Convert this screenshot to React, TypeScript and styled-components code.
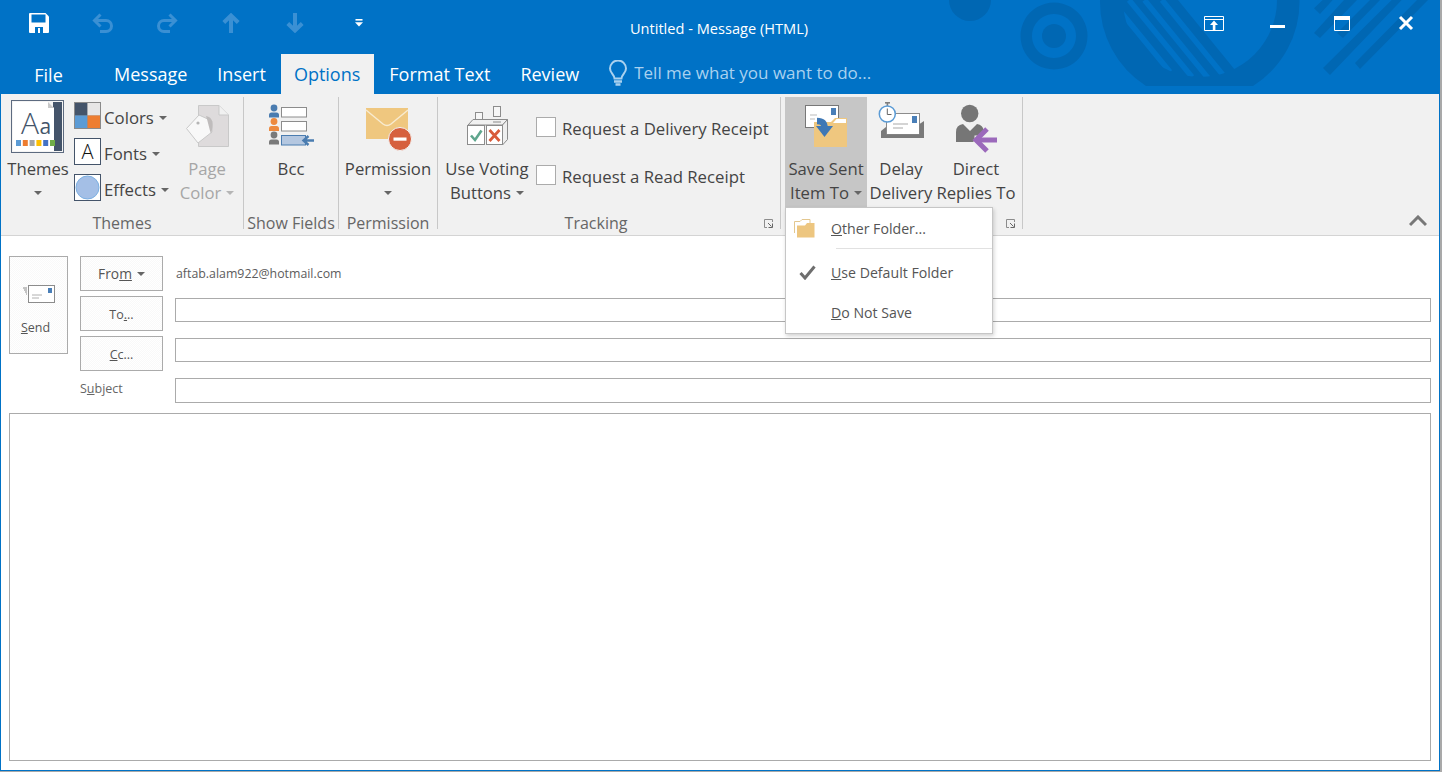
import React from "react";
import styled, { createGlobalStyle } from "styled-components";

const BLUE = "#0072c6";
const DARK = "#0067b3";
const FONT = `"Open Sans", "Noto Sans", "Liberation Sans", sans-serif`;

const Global = createGlobalStyle`
  html, body { margin: 0; padding: 0; width: 1442px; height: 772px; background: #a9a9a9; overflow: hidden; }
  #root { width: 1442px; height: 772px; }
  * { box-sizing: border-box; }
`;

const Window = styled.div`
  width: 1440px;
  height: 771px;
  background: #fff;
  border: 1px solid ${BLUE};
  border-top: 0;
  font-family: ${FONT};
  display: flex;
  flex-direction: column;
  position: relative;
`;

const Header = styled.header`
  height: 94px;
  margin: 0 -1px;
  background: ${BLUE};
  position: relative;
  flex: none;
`;

const Deco = styled.svg`
  position: absolute;
  left: 0;
  top: 0;
`;

const TitleRow = styled.div`
  position: relative;
  height: 54px;
  display: grid;
  grid-template-columns: 1fr auto 1fr;
  align-items: start;
`;

const Qat = styled.div`
  display: flex;
  padding: 13px 0 0 7px;
`;

const QatButton = styled.div`
  width: 64px;
  height: 20px;
  display: flex;
  align-items: center;
  justify-content: center;
`;

const Title = styled.div`
  color: #fff;
  font-size: 14.6px;
  line-height: 20px;
  padding: 18px 2px 0 0;
`;

const WinButtons = styled.div`
  display: flex;
  justify-content: flex-end;
  padding: 13px 2px 0 0;
`;

const WinButton = styled.div`
  width: 64px;
  height: 20px;
  display: flex;
  align-items: center;
  justify-content: center;
`;

const TabRow = styled.nav`
  position: relative;
  height: 40px;
  display: flex;
  padding-left: 1px;
`;

const Tab = styled.div<{ $active?: boolean; $wide?: boolean }>`
  height: 40px;
  line-height: 40px;
  font-size: 18px;
  padding: 0 ${(p) => (p.$active ? "14px 0 13px" : "15px")};
  color: ${(p) => (p.$active ? BLUE : "#fff")};
  background: ${(p) => (p.$active ? "#f1f1f1" : "transparent")};
  ${(p) => (p.$wide ? "width: 98px; text-align: center; padding: 1px 3px 0 0;" : "")}
  white-space: nowrap;
`;

const TellMe = styled.div`
  display: flex;
  align-items: center;
  gap: 7px;
  margin-left: 15px;
  padding-bottom: 3px;
  color: #a9d1ef;
  font-size: 17px;
  white-space: nowrap;
`;

const Ribbon = styled.section`
  position: relative;
  flex: none;
  height: 142px;
  background: #f1f1f1;
  border-bottom: 1px solid #d4d4d4;
  display: flex;
  padding-top: 3px;
  color: #444;
`;

const Group = styled.div<{ $w: number }>`
  position: relative;
  width: ${(p) => p.$w}px;
  height: 132px;
  border-right: 1px solid #c8c8c8;
  flex: none;
  display: flex;
  flex-direction: column;
`;

const GroupBody = styled.div<{ $pad?: number }>`
  height: 112px;
  display: flex;
  align-items: flex-start;
  padding-left: ${(p) => p.$pad ?? 0}px;
`;

const GroupLabel = styled.div<{ $shift?: number }>`
  height: 20px;
  line-height: 28px;
  font-size: 16px;
  color: #666;
  text-align: center;
  white-space: nowrap;
  padding-right: ${(p) => p.$shift ?? 0}px;
`;

const Launcher = styled.svg`
  position: absolute;
  right: 7px;
  bottom: 1px;
`;

const LargeButton = styled.div<{ $w: number; $active?: boolean; $disabled?: boolean }>`
  width: ${(p) => p.$w}px;
  height: 111px;
  flex: none;
  display: flex;
  flex-direction: column;
  align-items: center;
  background: ${(p) => (p.$active ? "#c6c6c6" : "transparent")};
  color: ${(p) => (p.$disabled ? "#a6a6a6" : "#444")};
`;

const IconSlot = styled.div`
  height: 60px;
  flex: none;
  display: flex;
  justify-content: center;
`;

const Line = styled.div`
  height: 24px;
  line-height: 24px;
  font-size: 16.7px;
  white-space: nowrap;
  display: flex;
  align-items: center;
  justify-content: center;
`;

const Caret = styled.span<{ $tone?: string; $gap?: number }>`
  display: inline-block;
  width: 0;
  height: 0;
  margin-left: ${(p) => p.$gap ?? 5}px;
  border-left: 4px solid transparent;
  border-right: 4px solid transparent;
  border-top: 4px solid ${(p) => p.$tone ?? "#666"};
`;

const SmallStack = styled.div`
  width: 101px;
  margin-left: 3px;
  padding-top: 5px;
  display: flex;
  flex-direction: column;
  gap: 9px;
  flex: none;
`;

const SmallRow = styled.div`
  height: 27px;
  display: flex;
  align-items: center;
  font-size: 16.8px;
  gap: 3px;
  white-space: nowrap;
`;

const SmallLabel = styled.span`
  padding-top: 4px;
  display: flex;
  align-items: center;
`;

const Swatch = styled.svg`
  flex: none;
`;

const Checks = styled.div`
  padding: 20px 0 0 2px;
  display: flex;
  flex-direction: column;
  gap: 28px;
`;

const CheckRow = styled.div`
  height: 20px;
  display: flex;
  align-items: center;
  gap: 6px;
  font-size: 16.75px;
  white-space: nowrap;
`;

const CheckLabel = styled.span`
  padding-top: 2px;
`;

const CheckBox = styled.span`
  width: 20px;
  height: 20px;
  flex: none;
  background: #fff;
  border: 1px solid #ababab;
`;

const Collapse = styled.svg`
  margin-left: auto;
  margin-right: 12px;
  margin-top: 118px;
`;

const Menu = styled.div`
  position: absolute;
  left: 784px;
  top: 113px;
  width: 208px;
  height: 127px;
  background: #fff;
  border: 1px solid #c6c6c6;
  box-shadow: 1px 2px 4px rgba(0, 0, 0, 0.18);
  z-index: 5;
  color: #555;
  font-size: 14.15px;
`;

const MenuItem = styled.div<{ $h: number }>`
  height: ${(p) => p.$h}px;
  display: flex;
  align-items: center;
  white-space: nowrap;
`;

const MenuIcon = styled.span<{ $nudge?: number }>`
  width: 45px;
  flex: none;
  display: flex;
  justify-content: center;
  padding: 0 8px 0 ${(p) => p.$nudge ?? 0}px;
`;

const MenuText = styled.span`
  padding-top: 1px;
`;

const MenuSep = styled.div`
  height: 1px;
  margin: 0 0 3px 50px;
  background: #e1e1e1;
`;

const Compose = styled.main`
  flex: 1;
  min-height: 0;
  display: flex;
  flex-direction: column;
  gap: 10px;
  padding: 20px 8px 9px;
`;

const Head = styled.div`
  display: flex;
  gap: 12px;
  align-items: flex-start;
  color: #555;
`;

const hatch = `repeating-conic-gradient(#f9f9f9 0 25%, #fff 0 50%) 0 0 / 2px 2px`;

const SendButton = styled.div`
  width: 59px;
  height: 98px;
  flex: none;
  border: 1px solid #ababab;
  background: ${hatch};
  display: flex;
  flex-direction: column;
  align-items: center;
  padding-top: 28px;
  gap: 15px;
  font-size: 12.5px;
  line-height: 18px;
`;

const SendLabel = styled.span`
  padding-right: 6px;
`;

const Fields = styled.div`
  flex: 1;
  display: grid;
  grid-template-columns: 83px 1fr;
  column-gap: 12px;
  row-gap: 5px;
  grid-auto-rows: auto;
  font-size: 12.5px;
`;

const FieldButton = styled.div<{ $large?: boolean }>`
  height: 35px;
  border: 1px solid #ababab;
  background: ${hatch};
  display: flex;
  align-items: center;
  justify-content: center;
  padding-top: ${(p) => (p.$large ? 0 : 1)}px;
  font-size: ${(p) => (p.$large ? 13.8 : 12.5)}px;
  white-space: nowrap;
`;

const FromValue = styled.div`
  height: 35px;
  line-height: 35px;
  padding-left: 1px;
  font-size: 12.35px;
  color: #5c5c5c;
`;

const Input = styled.div<{ $tall?: boolean }>`
  height: ${(p) => (p.$tall ? 25 : 24)}px;
  margin-top: 2px;
  border: 1px solid #ababab;
  background: #fff;
`;

const SubjectLabel = styled.div`
  margin-top: 3px;
  line-height: 20px;
  color: #666;
`;

const Body = styled.div`
  flex: 1;
  border: 1px solid #ababab;
  background: #fff;
`;

const Icon = ({ x, w, y = 97, h = 60, children }: { x: number; w: number; y?: number; h?: number; children: React.ReactNode }) => (
  <svg width={w} height={h} viewBox={`${x} ${y} ${w} ${h}`}>{children}</svg>
);

const Decoration = () => (
  <Deco width="1442" height="94" viewBox="0 0 1442 94">
    <defs>
      <clipPath id="inner"><circle cx="1200" cy="0" r="77" /></clipPath>
    </defs>
    <g fill={DARK}>
      <circle cx="970" cy="0" r="21" />
      <path fillRule="evenodd" d="M1054 2.5a33.5 33.5 0 1 0 .01 0zM1054 14a22 22 0 1 1-.01 0z" />
      <circle cx="1054" cy="36" r="12" />
      <path d="M1100 0H1299.5A99.7 99.7 0 0 1 1253 86H1146A99.7 99.7 0 0 1 1100 0Z" />
      <path d="M1322.7 0h10L1320 14l-6-5.7zM1344 0h13L1320 38l-6-5zM1370 0h10L1343 38l-6-5zM1391.7 0h10L1330 75l-7-7zM1417 0h11L1360 69l-5-6z" />
    </g>
    <g clipPath="url(#inner)" fill={BLUE} stroke={BLUE}>
      <path stroke="none" d="M1178 0L1235 70L1300 70V0Z" />
      <path fill="none" strokeWidth="5.5" d="M1162 0L1223 75M1144.5 0L1208 78M1129 0L1192 77M1111 0L1170 72" />
    </g>
  </Deco>
);

const SaveIcon = () => (
  <svg width="20" height="20" viewBox="0 0 20 20">
    <path fill="#fff" d="M1 0H16.5L20 3.5V19a1 1 0 0 1-1 1H1a1 1 0 0 1-1-1V1a1 1 0 0 1 1-1Z" />
    <rect x="2.5" y="1.5" width="14" height="8" fill={BLUE} />
    <rect x="6" y="14" width="8" height="6" fill={BLUE} />
    <rect x="9" y="15" width="2" height="5" fill="#fff" />
  </svg>
);

const UndoIcon = ({ flip }: { flip?: boolean }) => (
  <svg width="22" height="20" viewBox="0 0 22 20" style={flip ? { transform: "scaleX(-1)" } : undefined}>
    <path fill="none" stroke="#3a90d4" strokeWidth="3" d="M8.5 1.5L2.5 7.5L8.5 13.5M2.5 7.5H14a5 5 0 0 1 0 11H8" />
  </svg>
);

const ArrowIcon = ({ down }: { down?: boolean }) => (
  <svg width="18" height="20" viewBox="0 0 18 20" style={down ? { transform: "scaleY(-1)" } : undefined}>
    <path fill="none" stroke="#3a90d4" strokeWidth="4" d="M9 2.5V20M1.8 9.5L9 2.5L16.2 9.5" />
  </svg>
);

const CustomizeIcon = () => (
  <svg width="8" height="8" viewBox="0 0 8 8">
    <rect x="0.5" y="0" width="7" height="1.6" fill="#fff" />
    <path fill="#fff" d="M0 3.2H8L4 7.6Z" />
  </svg>
);

const RibbonDisplayIcon = () => (
  <svg width="20" height="15" viewBox="0 0 20 15">
    <path fill="none" stroke="#fff" d="M.5.5h19v14H.5zM.5 3.5h19" />
    <path fill="#fff" d="M10 4.5L14 9h-2.6v5.5h-2.6V9H6Z" />
  </svg>
);

const ThemesIcon = () => (
  <Icon x={11} w={54}>
    <rect x="11.5" y="100.5" width="52" height="52" fill="#f4f4f4" stroke="#5d6b80" />
    <rect x="53" y="102" width="9" height="49" fill="#44546a" />
    <path d="M13 102H48L54 108V151H13Z" fill="#fff" />
    <path d="M48 102L54 108H48Z" fill="#c9c9c9" />
    <text x="21" y="134" fontSize="30" fontWeight="300" fontFamily={FONT} fill="#44546a">A</text>
    <text x="39.5" y="134" fontSize="21" fontFamily={FONT} fill="#44546a">a</text>
    {["#5b9bd5", "#ed7d31", "#a5a5a5", "#ffc000", "#4472c4", "#70ad47"].map((c, i) => (
      <rect key={c} x={16 + i * 6.8} y="140" width="5" height="6" fill={c} />
    ))}
  </Icon>
);

const ColorsSwatch = () => (
  <Swatch width="27" height="27" viewBox="0 0 27 27">
    <rect width="27" height="27" fill="#8a8a8a" />
    <rect x="1" y="1" width="12.5" height="12.5" fill="#44546a" />
    <rect x="13.5" y="1" width="12.5" height="12.5" fill="#e7e6e6" />
    <rect x="1" y="13.5" width="12.5" height="12.5" fill="#5b9bd5" />
    <rect x="13.5" y="13.5" width="12.5" height="12.5" fill="#ed7d31" />
  </Swatch>
);

const FontsSwatch = () => (
  <Swatch width="27" height="27" viewBox="0 0 27 27">
    <rect x=".5" y=".5" width="26" height="26" fill="#fff" stroke="#44546a" />
    <text x="13.5" y="21" textAnchor="middle" fontSize="20" fontWeight="300" fontFamily={FONT} fill="#111">A</text>
  </Swatch>
);

const EffectsSwatch = () => (
  <Swatch width="27" height="27" viewBox="0 0 27 27">
    <rect x=".5" y=".5" width="26" height="26" fill="#fff" stroke="#44546a" />
    <circle cx="13.5" cy="13.5" r="11.5" fill="#a4bfe6" stroke="#7cb0e2" />
  </Swatch>
);

const PageColorIcon = () => (
  <Icon x={185} w={45}>
    <path d="M198.5 105.5H219L228.5 115V146.5H198.5Z" fill="#dedbdc" stroke="#c9c9c9" />
    <path d="M219 105.5V115H228.5" fill="#f1f1f1" stroke="#c9c9c9" />
    <path d="M186.5 128.5L199 115L212 121V132L198 143Z" fill="#f8f8f8" stroke="#c9c9c9" />
    <circle cx="198" cy="123" r="1.6" fill="#b5b5b5" />
    <path d="M206 116C213 117 214 124 211 134C209 128 208 122 206 116Z" fill="#bfbcbc" />
  </Icon>
);

const BccIcon = () => (
  <Icon x={268} w={47}>
    <g stroke="#8c8c8c" fill="#fff">
      <rect x="281.5" y="107.5" width="25" height="9.5" />
      <rect x="281.5" y="121.5" width="25" height="9.5" />
    </g>
    <rect x="281.5" y="135.5" width="24" height="9.5" fill="#b4c7e0" stroke="#4a7cb0" />
    <path d="M314 140.5H304M308.5 136L303.5 140.5L308.5 145" fill="none" stroke="#4a7cb0" strokeWidth="2.4" />
    {[["#4a7cb0", 108], ["#ed8a3f", 121.5], ["#7a7a7a", 135]].map(([c, y]) => (
      <g key={String(c)} fill={String(c)}>
        <circle cx="274" cy={Number(y)} r="3.4" />
        <path d={`M269 ${Number(y) + 9.5}V${Number(y) + 7}Q269 ${Number(y) + 4.5} 271.5 ${Number(y) + 4.5}H276.5Q279 ${Number(y) + 4.5} 279 ${Number(y) + 7}V${Number(y) + 9.5}Z`} />
      </g>
    ))}
  </Icon>
);

const PermissionIcon = () => (
  <Icon x={365} w={47}>
    <rect x="366" y="108" width="42" height="31" fill="#efc77f" />
    <path d="M366 110L383 124Q387 127 391 124L408 110" fill="none" stroke="#f8ebcf" strokeWidth="1.5" />
    <circle cx="400" cy="139" r="11.5" fill="#d6603e" stroke="#f4f4f4" strokeWidth="1" />
    <rect x="393.5" y="137.5" width="13" height="3.2" fill="#fff" />
  </Icon>
);

const VotingIcon = () => (
  <Icon x={463} w={46}>
    <g fill="#f6f6f6" stroke="#8c8c8c" strokeWidth="1">
      <rect x="474.5" y="112.5" width="7" height="10" />
      <rect x="492.5" y="106.5" width="7" height="10" />
      <path d="M467 125L472 119.5H506.5L501.5 125Z" fill="#f1f1f1" />
      <path d="M501.5 125L506.5 119.5V139.5L501.5 145Z" fill="#efefef" />
      <rect x="466.5" y="125.5" width="17" height="19" fill="#fff" />
      <rect x="485.5" y="125.5" width="16" height="19" fill="#fff" />
    </g>
    <path d="M470 135.5L474 140L480.5 130.5" fill="none" stroke="#5fa68d" strokeWidth="2.6" />
    <path d="M488.5 130L498.5 141M498.5 130L488.5 141" fill="none" stroke="#d95b3a" strokeWidth="2.8" />
    <rect x="492" y="121.5" width="8" height="1" fill="#8c8c8c" />
  </Icon>
);

const SaveSentIcon = () => (
  <Icon x={803} w={45}>
    <rect x="804.5" y="105.5" width="33" height="22" fill="#fff" stroke="#777" />
    <rect x="830" y="108" width="5" height="7" fill="#4a7fb8" />
    <path d="M809 115H816M809 119H814" stroke="#bbb" />
    <path d="M813 147V122H830L834 118H846V147Z" fill="#efc77f" />
    <path d="M832 123L835.5 119H845V123Z" fill="#fff" />
    <path d="M816 121C821 121 823.5 123 823.5 128" fill="none" stroke="#3f78b5" strokeWidth="6.5" />
    <path d="M815 126H832L823.5 137Z" fill="#3f78b5" />
  </Icon>
);

const DelayIcon = () => (
  <Icon x={875} w={47}>
    <rect x="883.5" y="113.5" width="33" height="21" fill="#fff" stroke="#8c8c8c" />
    <rect x="909" y="116" width="5" height="7" fill="#4a7fb8" />
    <path d="M890 124H905M890 128H900" stroke="#a9a9a9" />
    <path d="M878 138V131L883 127V134.5H916.5V124L921 121V138Z" fill="#7a7a7a" />
    <rect x="882" y="102" width="5" height="1.6" fill="#7f7f7f" />
    <rect x="883.6" y="103" width="1.6" height="3" fill="#7f7f7f" />
    <circle cx="884.3" cy="114" r="8" fill="#fff" stroke="#5b9bd5" strokeWidth="1.5" />
    <path d="M884.3 108.5V114.5H888.5" fill="none" stroke="#666" />
  </Icon>
);

const DirectIcon = () => (
  <Icon x={957} w={45}>
    <circle cx="972.7" cy="113.5" r="8.7" fill="#767676" />
    <path d="M959 142V132Q959 125 966 124L973 131L980 124Q986 125 987 131L976 142Z" fill="#767676" />
    <path d="M977.5 140H1000" stroke="#f1f1f1" strokeWidth="9" />
    <path d="M981 140H1000" stroke="#9b69bb" strokeWidth="5" />
    <path d="M990 129L979 140L990 151" fill="none" stroke="#9b69bb" strokeWidth="5" />
  </Icon>
);

const SendIcon = () => (
  <svg width="33" height="19" viewBox="21 286 33 19">
    <rect x="27.5" y="286.5" width="26" height="17" fill="#fff" stroke="#8c8c8c" />
    <rect x="47" y="289" width="4" height="5" fill="#4a7fb8" />
    <path d="M31 296H41M31 299H38" stroke="#b0b0b0" />
    <path d="M22 289H26M23 291H26M24 293H26M25 295H26" stroke="#8c8c8c" />
  </svg>
);

const LauncherIcon = () => (
  <Launcher width="9" height="9" viewBox="0 0 9 9">
    <path d="M8.5 3V.5H.5V8.5H3" fill="none" stroke="#8c8c8c" />
    <path d="M4 4L7.5 7.5M8.5 4.5V8.5H4.5" fill="none" stroke="#666" />
  </Launcher>
);

export default function App() {
  return (
    <>
      <Global />
      <Window>
        <Header>
          <Decoration />
          <TitleRow>
            <Qat>
              <QatButton><SaveIcon /></QatButton>
              <QatButton><UndoIcon /></QatButton>
              <QatButton><UndoIcon flip /></QatButton>
              <QatButton><ArrowIcon /></QatButton>
              <QatButton><ArrowIcon down /></QatButton>
              <QatButton><CustomizeIcon /></QatButton>
            </Qat>
            <Title>Untitled - Message (HTML)</Title>
            <WinButtons>
              <WinButton><RibbonDisplayIcon /></WinButton>
              <WinButton>
                <svg width="16" height="20" viewBox="0 0 16 20"><rect y="12" width="15" height="3" fill="#fff" /></svg>
              </WinButton>
              <WinButton>
                <svg width="16" height="16" viewBox="0 0 16 16"><path fill="none" stroke="#fff" d="M.5 1.5h15v14H.5z" /><rect width="16" height="4" y="1" fill="#fff" /></svg>
              </WinButton>
              <WinButton>
                <svg width="16" height="16" viewBox="0 0 16 16"><path stroke="#fff" strokeWidth="3" d="M2 2L14 14M14 2L2 14" /></svg>
              </WinButton>
            </WinButtons>
          </TitleRow>
          <TabRow>
            <Tab $wide>File</Tab>
            <Tab>Message</Tab>
            <Tab>Insert</Tab>
            <Tab $active>Options</Tab>
            <Tab>Format Text</Tab>
            <Tab>Review</Tab>
            <TellMe>
              <svg width="18" height="26" viewBox="0 0 18 26">
                <path d="M5.5 18.5C5 14 1 13 1 8.5a8 8 0 0 1 16 0C17 13 13 14 12.5 18.5Z" fill="none" stroke="#a9d1ef" strokeWidth="2" />
                <path d="M5 21.5H13M6.5 24.5H11.5" stroke="#a9d1ef" strokeWidth="2.4" />
              </svg>
              Tell me what you want to do...
            </TellMe>
          </TabRow>
        </Header>

        <Ribbon>
          <Group $w={243}>
            <GroupBody $pad={4}>
              <LargeButton $w={66}>
                <IconSlot><ThemesIcon /></IconSlot>
                <Line>Themes</Line>
                <Line><Caret $gap={0} /></Line>
              </LargeButton>
              <SmallStack>
                <SmallRow><ColorsSwatch /><SmallLabel>Colors<Caret /></SmallLabel></SmallRow>
                <SmallRow><FontsSwatch /><SmallLabel>Fonts<Caret /></SmallLabel></SmallRow>
                <SmallRow><EffectsSwatch /><SmallLabel>Effects<Caret /></SmallLabel></SmallRow>
              </SmallStack>
              <LargeButton $w={64} $disabled>
                <IconSlot><PageColorIcon /></IconSlot>
                <Line>Page</Line>
                <Line>Color<Caret $tone="#b5b5b5" /></Line>
              </LargeButton>
            </GroupBody>
            <GroupLabel>Themes</GroupLabel>
          </Group>
          <Group $w={95}>
            <GroupBody>
              <LargeButton $w={94}>
                <IconSlot><BccIcon /></IconSlot>
                <Line>Bcc</Line>
              </LargeButton>
            </GroupBody>
            <GroupLabel>Show Fields</GroupLabel>
          </Group>
          <Group $w={99}>
            <GroupBody>
              <LargeButton $w={98}>
                <IconSlot><PermissionIcon /></IconSlot>
                <Line>Permission</Line>
                <Line><Caret $gap={0} /></Line>
              </LargeButton>
            </GroupBody>
            <GroupLabel>Permission</GroupLabel>
          </Group>
          <Group $w={343}>
            <GroupBody $pad={2}>
              <LargeButton $w={94}>
                <IconSlot><VotingIcon /></IconSlot>
                <Line>Use Voting</Line>
                <Line>Buttons<Caret /></Line>
              </LargeButton>
              <Checks>
                <CheckRow><CheckBox /><CheckLabel>Request a Delivery Receipt</CheckLabel></CheckRow>
                <CheckRow><CheckBox /><CheckLabel>Request a Read Receipt</CheckLabel></CheckRow>
              </Checks>
            </GroupBody>
            <GroupLabel $shift={26}>Tracking</GroupLabel>
            <LauncherIcon />
          </Group>
          <Group $w={242}>
            <GroupBody $pad={4}>
              <LargeButton $w={82} $active>
                <IconSlot><SaveSentIcon /></IconSlot>
                <Line>Save Sent</Line>
                <Line>Item To<Caret /></Line>
              </LargeButton>
              <LargeButton $w={68}>
                <IconSlot><DelayIcon /></IconSlot>
                <Line>Delay</Line>
                <Line>Delivery</Line>
              </LargeButton>
              <LargeButton $w={82}>
                <IconSlot><DirectIcon /></IconSlot>
                <Line>Direct</Line>
                <Line>Replies To</Line>
              </LargeButton>
            </GroupBody>
            <LauncherIcon />
          </Group>
          <Collapse width="18" height="12" viewBox="0 0 18 12">
            <path d="M1 10L9 2L17 10" fill="none" stroke="#777" strokeWidth="3" />
          </Collapse>
          <Menu>
            <MenuItem $h={40}>
              <MenuIcon>
                <svg width="21" height="20" viewBox="0 0 21 20">
                  <path d="M.5 15V3.5H6L8 1.5H16V5" fill="none" stroke="#e3c78f" />
                  <path d="M3 19.5V7.5H11L13 5H20.5V19.5Z" fill="#edc680" />
                </svg>
              </MenuIcon>
              <MenuText><u>O</u>ther Folder...</MenuText>
            </MenuItem>
            <MenuSep />
            <MenuItem $h={40}>
              <MenuIcon $nudge={6}>
                <svg width="17" height="15" viewBox="0 0 17 15">
                  <path d="M1.5 8L6 13L15.5 1.5" fill="none" stroke="#6e6e6e" strokeWidth="3" />
                </svg>
              </MenuIcon>
              <span><u>U</u>se Default Folder</span>
            </MenuItem>
            <MenuItem $h={40}>
              <MenuIcon />
              <span><u>D</u>o Not Save</span>
            </MenuItem>
          </Menu>
        </Ribbon>

        <Compose>
          <Head>
            <SendButton>
              <SendIcon />
              <SendLabel><u>S</u>end</SendLabel>
            </SendButton>
            <Fields>
              <FieldButton $large>Fro<u>m</u><Caret /></FieldButton>
              <FromValue>aftab.alam922@hotmail.com</FromValue>
              <FieldButton>To<u>.</u>..</FieldButton>
              <Input />
              <FieldButton><u>C</u>c...</FieldButton>
              <Input />
              <SubjectLabel>S<u>u</u>bject</SubjectLabel>
              <Input $tall />
            </Fields>
          </Head>
          <Body />
        </Compose>
      </Window>
    </>
  );
}
